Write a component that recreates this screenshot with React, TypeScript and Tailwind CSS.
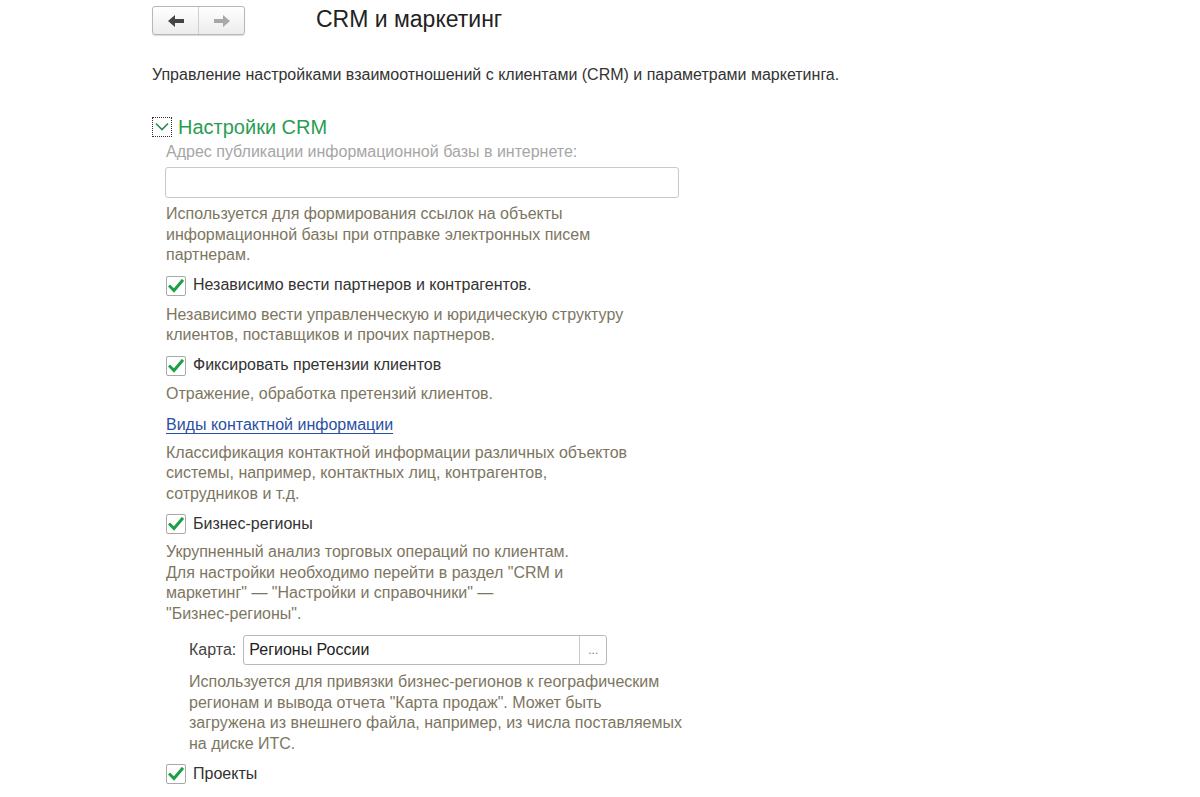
const desc = 'text-[#7d765f]';

function Check({ label }: { label: string }) {
  return (
    <div className="flex items-center gap-[7px] h-[20px]">
      <span className="w-[20px] h-[20px] rounded-[2px] border border-[#a9a9a9] bg-white flex items-center justify-center">
        <svg width="16" height="14" viewBox="0 0 16 14">
          <path d="M2 7.5 L6 11.5 L14 2" fill="none" stroke="#1f9e47" strokeWidth="3" strokeLinecap="square" />
        </svg>
      </span>
      <span className="text-[#333333]">{label}</span>
    </div>
  );
}

function NavArrow({ dir, color }: { dir: 'left' | 'right'; color: string }) {
  return (
    <svg width="18" height="14" viewBox="0 0 18 14" className={dir === 'right' ? 'scale-x-[-1]' : ''}>
      <path d="M1 7 L8 1 L8 5 L17 5 L17 9 L8 9 L8 13 Z" fill={color} />
    </svg>
  );
}

export default function App() {
  return (
    <div className="min-h-[797px] bg-white font-['Liberation_Sans',Arial,sans-serif] text-[16px] leading-[20.5px] text-[#333333]">
      <div className="pl-[152px]">
        {/* Top bar */}
        <div className="flex items-center pt-[4px] h-[37px]">
          <div className="flex w-[93px] h-[29px] rounded-[3px] border border-[#b7b7b7] bg-gradient-to-b from-white to-[#ececec] shadow-[0_1px_1px_rgba(0,0,0,0.15)]">
            <div className="w-[46px] flex items-center justify-center border-r border-[#d0d0d0]">
              <NavArrow dir="left" color="#444444" />
            </div>
            <div className="flex-1 flex items-center justify-center">
              <NavArrow dir="right" color="#a8a8a8" />
            </div>
          </div>
          <h1 className="ml-[71px] text-[23px] text-[#222222] -mt-[2px]">CRM и маркетинг</h1>
        </div>

        <p className="mt-[28px] text-[#333333]">
          Управление настройками взаимоотношений с клиентами (CRM) и параметрами маркетинга.
        </p>

        {/* Group header */}
        <div className="mt-[31px] flex items-center gap-[6px]">
          <span className="w-[20px] h-[20px] border border-dotted border-[#333333] flex items-center justify-center">
            <svg width="14" height="9" viewBox="0 0 14 9">
              <path d="M1 1.5 L7 7.5 L13 1.5" fill="none" stroke="#2b8a4e" strokeWidth="1.6" />
            </svg>
          </span>
          <span className="text-[20px] text-[#2a9d52] leading-[20px]">Настройки CRM</span>
        </div>

        <div className="pl-[14px]">
          <div className="mt-[5px] text-[#a6a6a6]">Адрес публикации информационной базы в интернете:</div>
          <div className="mt-[5px] -ml-[1px] w-[514px] h-[31px] rounded-[3px] border border-[#c9c9c9] bg-white" />
          <p className={`mt-[6px] ${desc}`}>
            Используется для формирования ссылок на объекты
            <br />
            информационной базы при отправке электронных писем
            <br />
            партнерам.
          </p>

          <div className="mt-[10px]">
            <Check label="Независимо вести партнеров и контрагентов." />
          </div>
          <p className={`mt-[9px] ${desc}`}>
            Независимо вести управленческую и юридическую структуру
            <br />
            клиентов, поставщиков и прочих партнеров.
          </p>

          <div className="mt-[10px]">
            <Check label="Фиксировать претензии клиентов" />
          </div>
          <p className={`mt-[8px] ${desc}`}>Отражение, обработка претензий клиентов.</p>

          <a className="mt-[11px] block w-fit text-[#2950a4] underline underline-offset-[3px] decoration-[#2950a4]">
            Виды контактной информации
          </a>
          <p className={`mt-[7px] ${desc}`}>
            Классификация контактной информации различных объектов
            <br />
            системы, например, контактных лиц, контрагентов,
            <br />
            сотрудников и т.д.
          </p>

          <div className="mt-[10px]">
            <Check label="Бизнес-регионы" />
          </div>
          <p className={`mt-[8px] ${desc}`}>
            Укрупненный анализ торговых операций по клиентам.
            <br />
            Для настройки необходимо перейти в раздел "CRM и
            <br />
            маркетинг" — "Настройки и справочники" —
            <br />
            "Бизнес-регионы".
          </p>

          <div className="pl-[23px]">
            <div className="mt-[11px] flex items-center gap-[7px]">
              <span className="text-[#444444]">Карта:</span>
              <div className="flex w-[364px] h-[30px] rounded-[3px] border border-[#b9b9b9] bg-white">
                <div className="flex-1 flex items-center pl-[5px] text-[#222222]">Регионы России</div>
                <div className="w-[27px] border-l border-[#c9c9c9] flex items-center justify-center text-[#777777] text-[12px]">
                  ...
                </div>
              </div>
            </div>
            <p className={`mt-[7px] ${desc}`}>
              Используется для привязки бизнес-регионов к географическим
              <br />
              регионам и вывода отчета "Карта продаж". Может быть
              <br />
              загружена из внешнего файла, например, из числа поставляемых
              <br />
              на диске ИТС.
            </p>
          </div>

          <div className="mt-[10px]">
            <Check label="Проекты" />
          </div>
        </div>
      </div>
    </div>
  );
}
